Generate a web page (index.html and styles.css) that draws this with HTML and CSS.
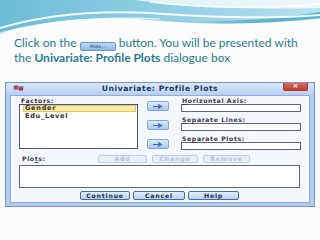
FILE: index.html
```html
<!DOCTYPE html>
<html>
<head>
<meta charset="utf-8">
<link rel="stylesheet" href="styles.css">
</head>
<body>
<div class="banner">
  <svg width="320" height="34" viewBox="0 0 320 34">
    <defs>
      <linearGradient id="bg" x1="0" y1="0" x2="1" y2="0">
        <stop offset="0" stop-color="#6cbdd6"/>
        <stop offset="0.5" stop-color="#8fcfe3"/>
        <stop offset="1" stop-color="#b9e2ee"/>
      </linearGradient>
      <linearGradient id="band" x1="0" y1="0" x2="1" y2="0">
        <stop offset="0" stop-color="#9fd6e7" stop-opacity="0"/>
        <stop offset="0.6" stop-color="#5db6d3"/>
        <stop offset="1" stop-color="#56b0d0"/>
      </linearGradient>
    </defs>
    <path d="M0 0H320V19C260 24 200 24 150 20 100 16 40 20 0 34Z" fill="url(#bg)"/>
    <path d="M130 18C190 24 260 22 320 12V18C260 25 190 26 130 18Z" fill="url(#band)"/>
    <path d="M0 28C40 16 90 10 150 13 200 16 260 20 320 15" stroke="#ffffff" stroke-width="2" fill="none" opacity="0.9"/>
    <path d="M0 33C50 20 100 16 160 19" stroke="#ffffff" stroke-width="1.2" fill="none" opacity="0.8"/>
    <path d="M135 0C180 6 240 10 320 8V0Z" fill="#ffffff" opacity="0.75"/>
    <path d="M150 2C200 8 260 9 320 4" stroke="#ffffff" stroke-width="1.5" fill="none" opacity="0.9"/>
  </svg>
</div>
<p class="intro">Click on the <span class="plots-btn">Plots...</span> button. You will be presented with<br>the <b>Univariate: Profile Plots</b> dialogue box</p>
<div class="dialog">
  <div class="titlebar">
    <span class="appicon">
      <svg width="11" height="6" viewBox="0 0 11 6">
        <rect x="0.5" y="1" width="10" height="4" rx="1" fill="#6f8fd0"/>
        <rect x="1" y="0.5" width="4" height="3" fill="#d23a3a"/>
        <rect x="6" y="2.5" width="4" height="3" fill="#c03030"/>
      </svg>
    </span>
    <span class="title">Univariate: Profile Plots</span>
    <span class="close">&#215;</span>
  </div>
  <div class="body">
    <div class="top">
      <div class="col-left">
        <div class="label">Factors:</div>
        <div class="listbox">
          <div class="item sel">Gender</div>
          <div class="item">Edu_Level</div>
        </div>
      </div>
      <div class="col-arrows">
        <div class="arrow"><svg width="10" height="5" viewBox="0 0 10 5"><path d="M0 2.5H7M5 0.5L8.5 2.5 5 4.5" stroke="#3b63b8" stroke-width="1.2" fill="none"/></svg></div>
        <div class="arrow"><svg width="10" height="5" viewBox="0 0 10 5"><path d="M0 2.5H7M5 0.5L8.5 2.5 5 4.5" stroke="#3b63b8" stroke-width="1.2" fill="none"/></svg></div>
        <div class="arrow"><svg width="10" height="5" viewBox="0 0 10 5"><path d="M0 2.5H7M5 0.5L8.5 2.5 5 4.5" stroke="#3b63b8" stroke-width="1.2" fill="none"/></svg></div>
      </div>
      <div class="col-right">
        <div class="field"><div class="label"><u>H</u>orizontal Axis:</div><div class="input"></div></div>
        <div class="field"><div class="label"><u>S</u>eparate Lines:</div><div class="input"></div></div>
        <div class="field"><div class="label">Se<u>p</u>arate Plots:</div><div class="input"></div></div>
      </div>
    </div>
    <div class="plots-row">
      <div class="label plots-label">Plo<u>t</u>s:</div>
      <div class="btn dis b-add">Add</div>
      <div class="btn dis b-change">Change</div>
      <div class="btn dis b-remove">Remove</div>
    </div>
    <div class="plots-box"></div>
    <div class="actions">
      <div class="btn act b-continue">Continue</div>
      <div class="btn act b-cancel">Cancel</div>
      <div class="btn act b-help">Help</div>
    </div>
  </div>
</div>
</body>
</html>
```
FILE: styles.css
```css
html, body {
  margin: 0;
  padding: 0;
}
body {
  width: 320px;
  height: 240px;
  overflow: hidden;
  background: #fcfcfc;
}
.banner svg {
  display: block;
}
.intro {
  margin: 0;
  padding: 2px 0 0 14px;
  font-family: Lato, "Open Sans", sans-serif;
  font-size: 12px;
  line-height: 13px;
  color: #2b7b90;
  white-space: nowrap;
}
.intro b {
  font-weight: 700;
}
.plots-btn {
  display: inline-block;
  width: 36px;
  height: 9px;
  vertical-align: -1px;
  box-sizing: border-box;
  border: 1px solid #6b93cc;
  border-radius: 2px;
  background: linear-gradient(#c4daf5, #8db5e6);
  font-family: "DejaVu Sans", sans-serif;
  font-size: 4.5px;
  line-height: 7px;
  text-align: center;
  color: #1d2f55;
}
.dialog {
  margin: 18px 0 0 5px;
  width: 310px;
  box-sizing: border-box;
  border: 1px solid #7596cc;
  background: #b3cbee;
  font-family: "DejaVu Sans", sans-serif;
  font-weight: bold;
}
.titlebar {
  height: 12px;
  display: grid;
  grid-template-columns: 1fr auto 1fr;
  align-items: start;
  background: linear-gradient(#dbe7f8, #b9cff0);
}
.appicon {
  justify-self: start;
  margin: 2px 0 0 7px;
  line-height: 0;
}
.title {
  font-size: 7.6px;
  line-height: 12px;
  letter-spacing: 0.55px;
  color: #1e3563;
}
.close {
  justify-self: end;
  margin: 0 6px 0 0;
  width: 23px;
  height: 7px;
  background: linear-gradient(#dd6a5c, #c23b2f);
  border: 1px solid #a33a33;
  border-top: none;
  border-radius: 0 0 2px 2px;
  color: #fff;
  font-size: 7px;
  line-height: 7px;
  text-align: center;
}
.body {
  margin: 0 4px 3px;
  border: 1px solid #8eaddc;
  background: #f4f7fc;
  padding: 1px 0 2px 8px;
}
.label {
  font-size: 6.2px;
  line-height: 7px;
  height: 7px;
  letter-spacing: 0.6px;
  color: #3a3a4a;
}
.label u {
  text-decoration-thickness: 0.6px;
}
.top {
  display: flex;
  align-items: flex-start;
}
.col-left {
  width: 119px;
}
.col-left .label {
  padding-left: 2px;
}
.listbox {
  height: 45px;
  box-sizing: border-box;
  border: 1px solid #4f5287;
  background: #fff;
  padding: 0 1px 0 3px;
}
.item {
  height: 7px;
  margin-bottom: 1px;
  font-size: 6.6px;
  line-height: 7px;
  letter-spacing: 0.7px;
  color: #333;
  padding-left: 2px;
  box-sizing: border-box;
}
.item.sel {
  background: #fcec9e;
  border: 1px solid #e2c66a;
  line-height: 5px;
  padding-left: 1px;
}
.col-arrows {
  margin: 0 12px 0 9px;
  padding-top: 4px;
  display: flex;
  flex-direction: column;
  gap: 9px;
}
.arrow {
  width: 22px;
  height: 10px;
  box-sizing: border-box;
  border: 1px solid #82a5d8;
  border-radius: 2px;
  background: linear-gradient(#dce9f9, #aac8ee);
  display: flex;
  align-items: center;
  justify-content: center;
}
.col-right {
  width: 120px;
}
.field {
  margin-bottom: 4px;
}
.field:last-child {
  margin-bottom: 0;
}
.col-right .label {
  padding-left: 1px;
}
.input {
  height: 8px;
  box-sizing: border-box;
  border: 1px solid #5c6787;
  background: #fff;
}
.plots-row {
  margin-top: 5px;
  height: 8px;
  display: flex;
}
.plots-label {
  width: 79px;
  box-sizing: border-box;
  padding-left: 3px;
  line-height: 8px;
}
.btn {
  height: 8px;
  box-sizing: border-box;
  border-radius: 2px;
  font-size: 6.2px;
  line-height: 6px;
  letter-spacing: 0.8px;
  text-align: center;
}
.btn.dis {
  border: 1px solid #bccde6;
  background: #e9eff9;
  color: #b3c0d6;
}
.b-add { width: 49px; margin-right: 5px; }
.b-change { width: 46px; margin-right: 5px; }
.b-remove { width: 47px; }
.plots-box {
  margin-top: 2px;
  width: 281px;
  height: 23px;
  box-sizing: border-box;
  border: 1px solid #5c6787;
  background: #fff;
}
.actions {
  margin-top: 3px;
  padding-left: 61px;
  display: flex;
  gap: 3px;
}
.btn.act {
  height: 9px;
  border: 1px solid #4a6aa6;
  background: linear-gradient(#e4eefb, #b7d0f1);
  color: #1d2c52;
  line-height: 7px;
}
.b-continue { width: 50px; }
.b-cancel { width: 52px; }
.b-help { width: 51px; }
```
